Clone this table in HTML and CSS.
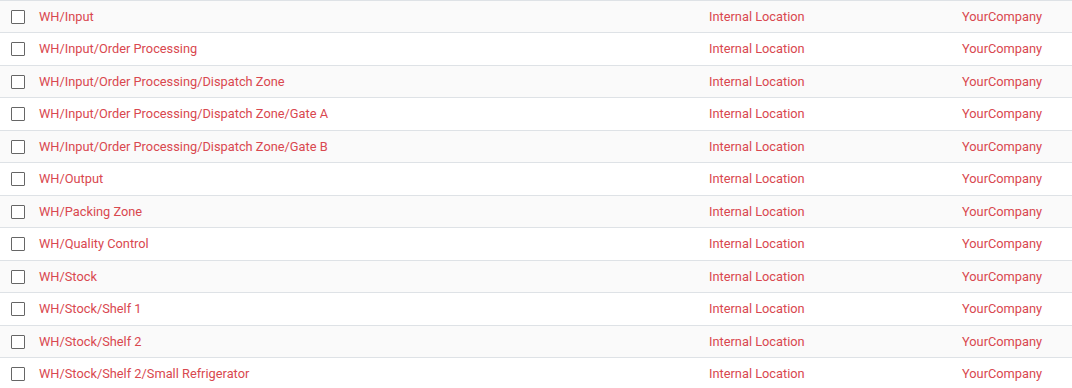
FILE: index.html
```html
<!DOCTYPE html>
<html>
<head>
<meta charset="utf-8">
<link rel="stylesheet" href="styles.css">
</head>
<body>
<div class="list">
  <div class="row"><span class="cb"></span><span class="name">WH/Input</span><span class="type">Internal Location</span><span class="co">YourCompany</span></div>
  <div class="row"><span class="cb"></span><span class="name">WH/Input/Order Processing</span><span class="type">Internal Location</span><span class="co">YourCompany</span></div>
  <div class="row"><span class="cb"></span><span class="name">WH/Input/Order Processing/Dispatch Zone</span><span class="type">Internal Location</span><span class="co">YourCompany</span></div>
  <div class="row"><span class="cb"></span><span class="name">WH/Input/Order Processing/Dispatch Zone/Gate A</span><span class="type">Internal Location</span><span class="co">YourCompany</span></div>
  <div class="row"><span class="cb"></span><span class="name">WH/Input/Order Processing/Dispatch Zone/Gate B</span><span class="type">Internal Location</span><span class="co">YourCompany</span></div>
  <div class="row"><span class="cb"></span><span class="name">WH/Output</span><span class="type">Internal Location</span><span class="co">YourCompany</span></div>
  <div class="row"><span class="cb"></span><span class="name">WH/Packing Zone</span><span class="type">Internal Location</span><span class="co">YourCompany</span></div>
  <div class="row"><span class="cb"></span><span class="name">WH/Quality Control</span><span class="type">Internal Location</span><span class="co">YourCompany</span></div>
  <div class="row"><span class="cb"></span><span class="name">WH/Stock</span><span class="type">Internal Location</span><span class="co">YourCompany</span></div>
  <div class="row"><span class="cb"></span><span class="name">WH/Stock/Shelf 1</span><span class="type">Internal Location</span><span class="co">YourCompany</span></div>
  <div class="row"><span class="cb"></span><span class="name">WH/Stock/Shelf 2</span><span class="type">Internal Location</span><span class="co">YourCompany</span></div>
  <div class="row"><span class="cb"></span><span class="name">WH/Stock/Shelf 2/Small Refrigerator</span><span class="type">Internal Location</span><span class="co">YourCompany</span></div>
</div>
</body>
</html>
```
FILE: styles.css
```css
html, body {
  margin: 0;
  padding: 0;
  background: #ffffff;
}
body {
  font-family: Roboto, "Liberation Sans", sans-serif;
  font-size: 12.8px;
  color: #d9484f;
}
.row {
  display: grid;
  grid-template-columns: 39px 670px 253px 1fr;
  align-items: start;
  height: 33px;
  padding-top: 8px;
  box-sizing: border-box;
  border-top: 1px solid #dee2e6;
}
.row:nth-child(odd) {
  height: 32px;
  background: #fafafa;
}
.cb {
  width: 12px;
  height: 12px;
  margin-top: 0.5px;
  border: 1px solid #666666;
  border-radius: 1px;
  background: #ffffff;
  margin-left: 11px;
  box-sizing: content-box;
}
.name, .type, .co {
  white-space: nowrap;
  line-height: 15px;
}
```
